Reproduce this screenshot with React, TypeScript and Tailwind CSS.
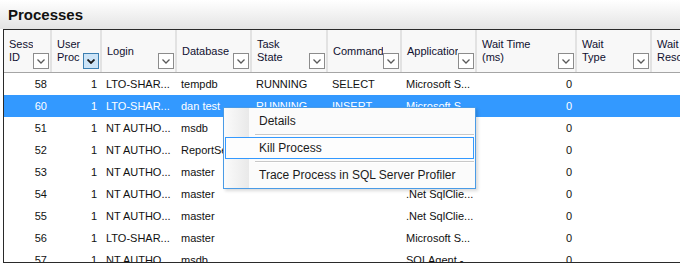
import React from 'react';

const COLS = [
  { title: ['Sess', 'ID'], w: 'w-[48px]', right: true, active: false },
  { title: ['User', 'Proc'], w: 'w-[50px]', right: true, active: true },
  { title: ['Login'], w: 'w-[75px]', right: false, active: false },
  { title: ['Database'], w: 'w-[75px]', right: false, active: false },
  { title: ['Task', 'State'], w: 'w-[76px]', right: false, active: false },
  { title: ['Command'], w: 'w-[74px]', right: false, active: false },
  { title: ['Application'], w: 'w-[75px]', right: false, active: false },
  { title: ['Wait Time', '(ms)'], w: 'w-[100px]', right: true, active: false },
  { title: ['Wait', 'Type'], w: 'w-[75px]', right: false, active: false },
  { title: ['Wait', 'Resource'], w: 'w-[75px]', right: false, active: false },
];

const ROWS = [
  ['58', '1', 'LTO-SHAR...', 'tempdb', 'RUNNING', 'SELECT', 'Microsoft S...', '0', '', ''],
  ['60', '1', 'LTO-SHAR...', 'dan test', 'RUNNING', 'INSERT', 'Microsoft S...', '0', '', ''],
  ['51', '1', 'NT AUTHO...', 'msdb', '', '', '', '0', '', ''],
  ['52', '1', 'NT AUTHO...', 'ReportServer', '', '', '', '0', '', ''],
  ['53', '1', 'NT AUTHO...', 'master', '', '', '', '0', '', ''],
  ['54', '1', 'NT AUTHO...', 'master', '', '', '.Net SqlClie...', '0', '', ''],
  ['55', '1', 'NT AUTHO...', 'master', '', '', '.Net SqlClie...', '0', '', ''],
  ['56', '1', 'LTO-SHAR...', 'master', '', '', 'Microsoft S...', '0', '', ''],
  ['57', '1', 'NT AUTHO...', 'msdb', '', '', 'SQLAgent - ...', '0', '', ''],
];

const Chevron = () => (
  <svg width="8" height="5" viewBox="0 0 8 5">
    <path d="M0.5 0.5 L4 4 L7.5 0.5" fill="none" stroke="#5a5a5a" strokeWidth="1.3" />
  </svg>
);

const ActiveChevron = () => (
  <svg width="8" height="5" viewBox="0 0 8 5">
    <path d="M0.5 0.5 L4 4 L7.5 0.5" fill="none" stroke="#1a1a1a" strokeWidth="1.8" />
  </svg>
);

export default function App() {
  return (
    <div
      className="relative w-[680px] h-[265px] overflow-hidden bg-white text-[11px] text-[#111]"
      style={{ fontFamily: '"Liberation Sans", Arial, sans-serif' }}
    >
      {/* Title strip */}
      <div className="h-[29px] bg-gradient-to-b from-white to-[#e4e4e4] pl-[8px] pt-[6px]">
        <span className="text-[15px] font-bold text-[#111] leading-[17px]">Processes</span>
      </div>

      {/* Grid frame */}
      <div className="ml-[3px] h-[234px] border-l border-t border-b border-[#2a2a2a] overflow-hidden">
        {/* Header */}
        <div className="flex h-[43px] border-b border-[#a5a5a5] bg-[#f8f8f8] w-[760px]">
          {COLS.map((c, i) => (
            <div key={i} className={`${c.w} shrink-0 flex border-r-2 border-[#e2e2e2]`}>
              <div className="flex-1 min-w-0 overflow-hidden pl-[5px] flex flex-col justify-center leading-[13px] text-[#101030] whitespace-nowrap">
                {c.title.map((t, j) => (
                  <div key={j}>{t}</div>
                ))}
              </div>
              <div
                className={`self-end mb-[3px] mr-[1px] w-[16px] h-[16px] shrink-0 flex items-center justify-center border ${
                  c.active ? 'border-[#3c7fb1] bg-[#cce4f7]' : 'border-[#8c8c8c] bg-white'
                }`}
              >
                {c.active ? <ActiveChevron /> : <Chevron />}
              </div>
            </div>
          ))}
        </div>

        {/* Rows */}
        {ROWS.map((r, ri) => (
          <div
            key={ri}
            className={`flex h-[22px] items-center pt-[1px] w-[760px] ${ri === 1 ? 'bg-[#3399ff] text-white' : ''}`}
          >
            {COLS.map((c, ci) => (
              <div
                key={ci}
                className={`${c.w} shrink-0 whitespace-nowrap overflow-hidden ${
                  c.right ? 'text-right pr-[5px]' : 'pl-[4px]'
                }`}
              >
                {r[ci]}
              </div>
            ))}
          </div>
        ))}
      </div>

      {/* Context menu */}
      <div className="absolute left-[223px] top-[107px] w-[253px] h-[82px] border border-[#4a9be6] bg-[#fbfbfb] flex shadow-[2px_2px_3px_rgba(0,0,0,0.15)] text-[12px] text-[#1b1b1b]">
        <div className="absolute left-0 top-0 bottom-0 w-[25px] bg-gradient-to-r from-[#fbfbfb] to-[#e9e9e9]" />
        <div className="relative flex-1 flex flex-col pt-[2px]">
          <div className="h-[22px] flex items-center pl-[35px]">Details</div>
          <div className="h-[5px] flex items-center pl-[31px] pr-[1px]">
            <div className="h-[2px] flex-1 border-t border-b border-t-[#c8c8c8] border-b-white" />
          </div>
          <div className="h-[22px] mx-[1px] flex items-center pl-[33px] border border-[#3399ff] bg-[#fdfdfd]">
            Kill Process
          </div>
          <div className="h-[5px] flex items-center pl-[31px] pr-[1px]">
            <div className="h-[2px] flex-1 border-t border-b border-t-[#c8c8c8] border-b-white" />
          </div>
          <div className="h-[22px] flex items-center pl-[35px]">Trace Process in SQL Server Profiler</div>
        </div>
      </div>
    </div>
  );
}
